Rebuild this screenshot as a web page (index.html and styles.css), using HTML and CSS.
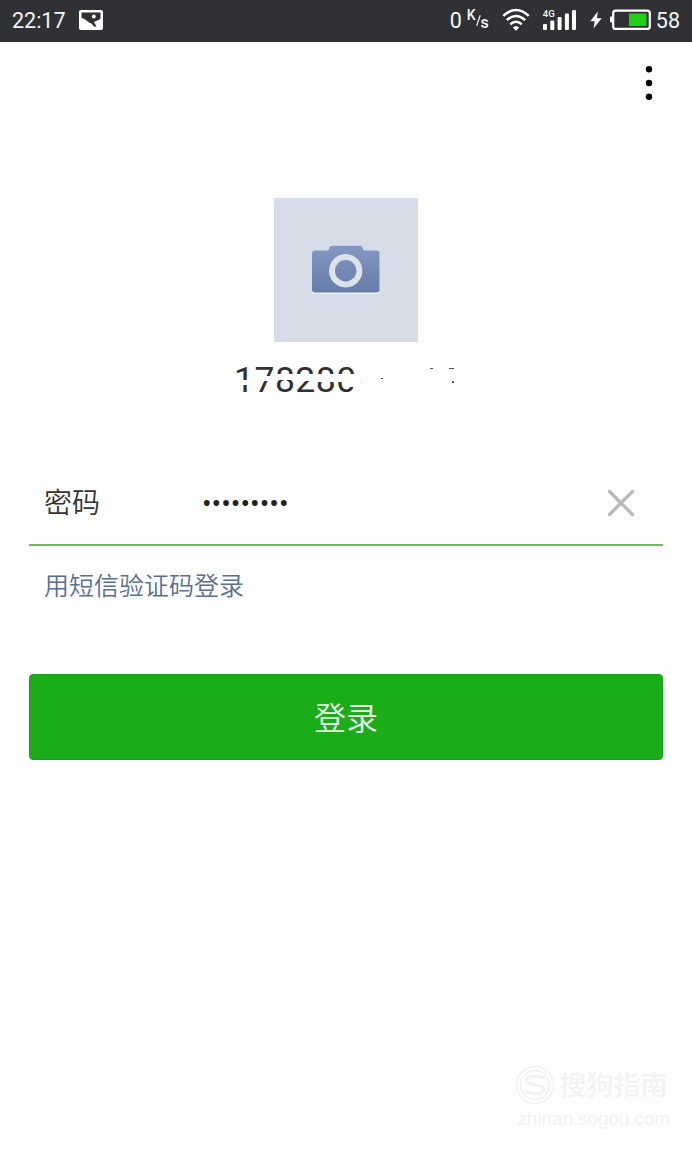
FILE: index.html
```html
<!DOCTYPE html>
<html lang="zh-CN">
<head>
  <meta charset="UTF-8">
  <meta name="viewport" content="width=device-width, initial-scale=1.0">
  <title>登录</title>
  <link rel="stylesheet" href="styles.css">
</head>
<body>
  <div class="status">
    <span class="status__time">22:17</span>
    <svg class="status__picture" width="24" height="20" viewBox="0 0 24 20">
      <rect width="24" height="20" rx="2" fill="#fff"/>
      <path d="M2.500 2.500H21.500V8.500C19 11 16.500 10.500 15 12.200L17.300 16L15.500 17L12.500 13.500C9 12.800 6.500 8.500 2.500 8Z" fill="#303135"/>
      <circle cx="14.800" cy="6.500" r="1.900" fill="#fff"/>
    </svg>
    <div class="status__right">
      <span class="status__rate">0</span>
      <span class="status__unit"><span class="status__unit-k">K</span><svg width="7" height="17" viewBox="0 0 7 17"><path d="M6 1L1 16" stroke="#f5f5f5" stroke-width="1.700"/></svg><span class="status__unit-s">s</span></span>
      <svg class="status__wifi" width="28" height="24" viewBox="0 0 28 24">
        <g fill="none" stroke="#fff" stroke-width="2.500">
          <path d="M1.300 7.800Q14 -3.800 26.700 7.800"/>
          <path d="M4.800 12.200Q14 3.800 23.200 12.200"/>
          <path d="M8.300 16.300Q14 11.200 19.700 16.300"/>
        </g>
        <path d="M14 23L10.900 19.600Q14 17 17.100 19.600Z" fill="#fff"/>
      </svg>
      <div class="signal">
        <span class="signal__type">4G</span>
        <svg width="34" height="22" viewBox="0 0 34 22" fill="#fff">
          <rect x="0" y="15" width="4" height="6" rx="1"/>
          <rect x="7.300" y="11.500" width="4" height="9.500" rx="1"/>
          <rect x="14.600" y="8" width="4" height="13" rx="1"/>
          <rect x="21.900" y="4.500" width="4" height="16.500" rx="1"/>
          <rect x="29" y="1" width="4" height="20" rx="1"/>
        </svg>
      </div>
      <svg class="status__bolt" width="12" height="18" viewBox="0 0 12 18">
        <path d="M7.800 0.500L0.300 10.200H4.800L3.500 17.500L11.700 7.300H7Z" fill="#fff"/>
      </svg>
      <svg class="status__battery" width="41" height="22" viewBox="0 0 41 22">
        <rect x="0" y="7.500" width="3" height="6" rx="1" fill="#fff"/>
        <rect x="3.200" y="1.700" width="36.600" height="18.200" rx="2.500" fill="none" stroke="#fff" stroke-width="2.200"/>
        <rect x="19" y="4.500" width="17.500" height="12.500" fill="#1fd014"/>
      </svg>
      <span class="status__percent">58</span>
    </div>
  </div>

  <div class="toolbar">
    <svg width="8" height="36" viewBox="0 0 8 36">
      <circle cx="4" cy="4.200" r="3.200"/>
      <circle cx="4" cy="18" r="3.200"/>
      <circle cx="4" cy="31.800" r="3.200"/>
    </svg>
  </div>

  <div class="account">
    <div class="account__avatar">
      <svg width="68" height="50" viewBox="0 0 68 50">
        <defs>
          <linearGradient id="body" x1="0" y1="0" x2="0" y2="1">
            <stop offset="0" stop-color="#8398c2"/>
            <stop offset="1" stop-color="#667da9"/>
          </linearGradient>
        </defs>
        <path d="M3 7H65Q67.500 7 67.500 10V46Q67.500 49 64.500 49H3Q0 49 0 46V10Q0 7 3 7Z" fill="#edf1f6"/>
        <path d="M3 5.500H15.500Q17 5.500 17 3.500Q17.500 0.800 20 0.800H48Q50.500 0.800 51 3.500Q51 5.500 52.500 5.500H64.500Q67.500 5.500 67.500 8.500V44.500Q67.500 47.500 64.500 47.500H3Q0 47.500 0 44.500V8.500Q0 5.500 3 5.500Z" fill="url(#body)"/>
        <circle cx="33.700" cy="25.800" r="13.700" fill="none" stroke="#dce3ed" stroke-width="6"/>
      </svg>
    </div>
    <div class="account__phone">
      <span>178280</span>
      <svg class="account__erased" width="228" height="40" viewBox="0 0 228 40">
        <path d="M0 21H20V17H42V15H125V28H117V23H84V22H62V21H42V22H20V26H0Z" fill="#fefefe"/>
        <g fill="#555">
          <rect x="149" y="19" width="2" height="1"/>
          <rect x="198" y="9" width="3" height="1"/>
          <rect x="217" y="9" width="5" height="1"/>
          <rect x="220" y="22" width="2" height="2"/>
          <rect x="129" y="23" width="1" height="1" fill="#ccc"/>
        </g>
      </svg>
    </div>
  </div>

  <div class="form">
    <div class="field">
      <span class="field__label">密码</span>
      <span class="field__value">•••••••••</span>
      <svg class="field__clear" width="28" height="28" viewBox="0 0 28 28">
        <path d="M2.500 2.500L25.500 25.500M25.500 2.500L2.500 25.500" stroke="#b9b9b9" stroke-width="3.200" stroke-linecap="round"/>
      </svg>
    </div>
    <a class="form__sms">用短信验证码登录</a>
    <button class="form__submit">登录</button>
  </div>

  <div class="watermark">
    <div class="watermark__brand">
      <svg width="40" height="40" viewBox="0 0 40 40" fill="none" stroke="#f1f1f1">
        <circle cx="20" cy="20" r="18.500" stroke-width="1.500"/>
        <circle cx="20" cy="20" r="14.500" stroke-width="1.500"/>
        <path d="M30 13C22 10 11 11 11 15.500C11 20 29 19 29 24C29 30 17 30 10 26" stroke-width="3"/>
      </svg>
      <span>搜狗指南</span>
    </div>
    <div class="watermark__url">zhinan.sogou.com</div>
  </div>
</body>
</html>
```
FILE: styles.css
```css
*{
  box-sizing:border-box;
}
body{
  display:flex;
  flex-direction:column;
  height:1153px;
  margin:0;
  background:#fefefe;
  font-family:Roboto, "Noto Sans CJK SC", sans-serif;
}
svg{
  display:block;
}
.status{
  display:flex;
  align-items:center;
  height:42px;
  padding:0 12px;
  color:#f5f5f5;
  background:#303135;
  font-size:22px;
  line-height:40px;
}
.status > *{
  margin-bottom:2px;
}
.status__time{
  width:54px;
  padding-top:1px;
  font-size:21.5px;
}
.status__picture{
  margin-left:13px;
}
.status__right{
  display:flex;
  align-items:center;
  margin-left:auto;
}
.status__rate,
.status__percent{
  padding-top:1px;
  font-size:21.5px;
}
.status__unit{
  display:flex;
  align-items:center;
  width:22px;
  margin-left:5px;
  font-size:14px;
  font-weight:500;
}
.status__unit-k{
  margin-top:-10px;
}
.status__unit-s{
  margin-top:5px;
  font-size:16px;
}
.status__wifi{
  margin-left:13px;
}
.signal{
  position:relative;
  margin-left:13px;
}
.signal__type{
  position:absolute;
  left:0;
  top:0;
  font-size:9.5px;
  font-weight:500;
  line-height:9px;
}
.status__bolt{
  margin-left:13px;
}
.status__battery{
  margin:0 5px 0 8px;
}
.toolbar{
  display:flex;
  justify-content:flex-end;
  height:156px;
  padding:23px 39px 0 0;
}
.account{
  display:flex;
  flex-direction:column;
  align-items:center;
  height:262px;
}
.account__avatar{
  display:flex;
  align-items:center;
  justify-content:center;
  width:144px;
  height:144px;
  background:#d6dde8;
}
.account__phone{
  position:relative;
  width:228px;
  height:40px;
  margin-top:17px;
  padding-left:2px;
  color:#303030;
  font-size:35.5px;
  letter-spacing:0.5px;
  line-height:42px;
}
.account__erased{
  position:absolute;
  left:0;
  top:0;
}
.form{
  display:flex;
  flex-direction:column;
  padding:0 29px;
}
.field{
  display:flex;
  align-items:center;
  height:86px;
  padding:2px 28px 0 15px;
  border-bottom:2px solid #75b95e;
}
.field__label{
  width:158px;
  margin-top:-4px;
  color:#333;
  font-size:28px;
  font-weight:350;
}
.field__value{
  color:#222;
  font-size:28.5px;
}
.field__clear{
  margin-left:auto;
}
.form__sms{
  height:128px;
  padding:22px 15px 0;
  color:#5b6f93;
  font-size:25px;
  font-weight:350;
  line-height:38px;
}
.form__submit{
  height:86px;
  padding:0 0 3px;
  border:1px solid #18a017;
  border-radius:4px;
  color:#e9f7e8;
  background:#1aad19;
  font-family:inherit;
  font-size:32px;
  font-weight:350;
}
.watermark{
  margin:auto 22px 21px auto;
  color:#f2f2f2;
}
.watermark__brand{
  display:flex;
  align-items:center;
  gap:5px;
  margin-left:-3px;
  font-size:27px;
  font-weight:500;
  line-height:40px;
}
.watermark__brand span{
  padding-top:3px;
}
.watermark__url{
  font-family:"Liberation Sans", sans-serif;
  font-size:18.8px;
  line-height:26px;
}
```
